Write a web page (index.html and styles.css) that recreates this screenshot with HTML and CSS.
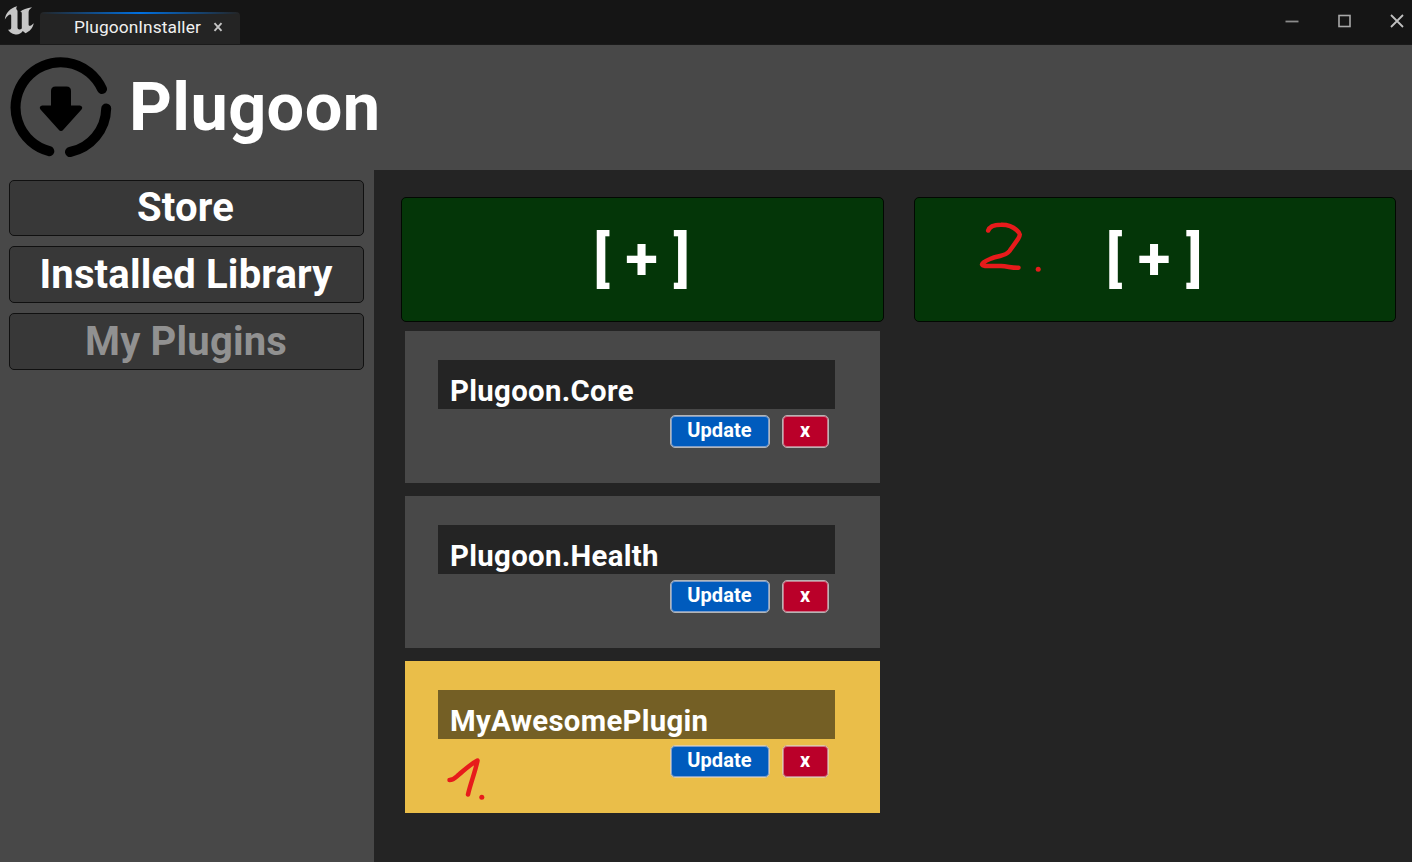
FILE: index.html
```
<!DOCTYPE html>
<html lang="en">
<head>
<meta charset="utf-8">
<title>PlugoonInstaller</title>
<link rel="stylesheet" href="styles.css">
</head>
<body>
<div class="window">
  <div class="titlebar">
    <svg class="engine-logo" width="40" height="44" viewBox="0 0 40 44"><path fill="#c6c6c6" d="M4.800 19.500C5.500 13 10 8 17.200 6.200C15.800 8 16 9 17.500 10.800V27.500C17.500 29.500 19.800 30.300 21.800 28.500V13.500C21.800 12 21 11.500 19.800 12C22.500 9.500 27 8 32 7.300C29.500 9.300 28.600 10.500 28.600 12.500V24.500C28.600 26.800 31 26 33.800 23.300C32.700 28.500 29.500 31.500 25.500 33.200L22.800 31C21 33.500 18.500 35 15.500 34.500C11.500 34 8.800 31.500 8 29.500C9.500 30.200 11.200 29.500 11.200 27.500V15.800C11.200 13.500 8.500 13.500 4.800 19.500Z"/></svg>
    <div class="tab">
      <span class="tab-title">PlugoonInstaller</span>
      <svg class="tab-close" width="10" height="10" viewBox="0 0 10 10"><path d="M1.500 1.200L8.500 8.800M8.500 1.200L1.500 8.800" stroke="#c4c4c4" stroke-width="1.900"/></svg>
    </div>
    <svg class="window-controls" width="132" height="44" viewBox="0 0 132 44" fill="none"><path d="M5.500 21.500H18.500" stroke="#8c8c8c" stroke-width="1.800"/><rect x="59" y="15.500" width="11" height="11" stroke="#a8a8a8" stroke-width="1.600"/><path d="M111 15L123 27M123 15L111 27" stroke="#c0c0c0" stroke-width="1.800"/></svg>
  </div>
  <header class="header">
    <svg class="logo" width="104" height="104" viewBox="0 0 104 104"><path d="M93 34A45.200 45.200 0 1 0 40.300 96.200M97.200 53.500A45.200 45.200 0 0 1 61 97" fill="none" stroke="#000" stroke-width="10" stroke-linecap="round"/><path d="M46.500 31.500H57.500Q62 31.500 62 36V50.500H71Q74.500 51.500 72.500 54.500L54.500 74.500Q52 77.500 49.500 74.500L31.500 54.500Q29.500 51.500 33 50.500H42V36Q42 31.500 46.500 31.500Z"/></svg>
    <h1 class="brand">Plugoon</h1>
  </header>
  <div class="body">
    <nav class="sidebar">
      <button class="nav-button nav-first">Store</button>
      <button class="nav-button">Installed Library</button>
      <button class="nav-button nav-disabled">My Plugins</button>
    </nav>
    <main class="content">
      <section class="column">
        <button class="add">[ + ]</button>
        <div class="cards">
          <article class="card">
            <div class="name">Plugoon.Core</div>
            <div class="actions"><button class="action update">Update</button><button class="action remove">x</button></div>
          </article>
          <article class="card">
            <div class="name">Plugoon.Health</div>
            <div class="actions"><button class="action update">Update</button><button class="action remove">x</button></div>
          </article>
          <article class="card card-own">
            <div class="name">MyAwesomePlugin</div>
            <div class="actions"><button class="action update">Update</button><button class="action remove">x</button></div>
            <svg class="mark mark-one" width="60" height="60" viewBox="0 0 60 60"><path d="M9.500 24C14 24 15 22 19 18.500C25 13.500 30 8.500 37.500 4.500C35.500 15 30 29 28 38.500"/><circle cx="41.800" cy="41.300" r="2.500"/></svg>
          </article>
        </div>
      </section>
      <section class="column">
        <button class="add">[ + ]</button>
        <svg class="mark mark-two" width="80" height="65" viewBox="0 0 80 65"><path d="M18.200 15.500C19.500 11.500 25 9.700 31 9.700C39 9.500 43 11.500 47 15.500C50.500 18.500 50.500 20 48 24C45 28.500 42 32.500 39.500 36C35 42 30 39.500 20 44C14 46.500 12 48.500 12 49.500C13 52 20 50.700 31 51C38 51.300 42 53 48.500 52.700"/><circle cx="68.200" cy="54.200" r="2.500"/></svg>
      </section>
    </main>
  </div>
</div>
</body>
</html>
```
FILE: styles.css
```
* { box-sizing: border-box; }
body { margin: 0; font-family: Roboto, "Liberation Sans", sans-serif; color: #fff; }
button { font: inherit; font-weight: 700; color: inherit; padding: 0; margin: 0; display: block; }
.window { width: 1412px; height: 862px; display: flex; flex-direction: column; background: #484848; overflow: hidden; }

.titlebar { height: 45px; flex: none; display: flex; background: #151515; border-bottom: 1px solid #1a1a1a; }
.engine-logo { flex: none; }
.tab { width: 200px; height: 32px; margin-top: 12px; padding-left: 34px; display: flex; align-items: flex-start; background: linear-gradient(90deg, #242424, #0070e0 50%, #242424) 0 0 / 100% 2px no-repeat #242424; border-radius: 4px 4px 0 0; }
.tab-title { font-size: 17.330px; line-height: 30px; letter-spacing: 0.080px; color: #f0f0f0; white-space: nowrap; }
.tab-close { margin: 10px 0 0 12px; flex: none; }
.window-controls { margin-left: auto; flex: none; }

.header { height: 125px; flex: none; display: flex; padding: 10px 0 0 9px; }
.logo { flex: none; }
.brand { margin: 0 0 0 16px; font-size: 66.670px; line-height: 104px; letter-spacing: 0.400px; font-weight: 700; }

.body { flex: 1; display: flex; min-height: 0; }
.sidebar { width: 374px; flex: none; padding: 10px 10px 0 9px; display: flex; flex-direction: column; gap: 10px; }
.nav-button { height: 57px; flex: none; padding-right: 1px; font-size: 40px; line-height: 55px; letter-spacing: 0.180px; background: #383838; border: 1px solid #101010; border-radius: 5px; }
.nav-first { height: 56px; line-height: 54px; padding-right: 2px; }
.nav-disabled { color: #919191; }

.content { flex: 1; display: flex; gap: 30px; padding: 27px 16px 0 27px; background: #242424; }
.column { flex: 1; position: relative; }
.add { width: 100%; height: 125px; padding: 0 1px 2px 0; font-size: 60px; line-height: 118px; letter-spacing: 0.300px; background: #043608; border: 1px solid #020802; border-radius: 5px; }
.cards { margin: 9px 4px 0; display: flex; flex-direction: column; gap: 13px; }
.card { position: relative; height: 152px; padding: 29px 45px 0 33px; background: #484848; }
.card-own { background: #eabe49; }
.name { height: 49px; padding: 11px 0 0 12px; font-size: 29.330px; line-height: 40px; letter-spacing: 0.330px; font-weight: 700; background: #242424; }
.card-own .name { letter-spacing: 0.290px; background: #745f25; }
.actions { display: flex; justify-content: flex-end; gap: 12px; padding: 6px 6px 0 0; }
.action { height: 33px; font-size: 20px; line-height: 28px; padding-bottom: 3px; border: 1px solid #b4b4b4; border-radius: 5px; }
.card-own .action { border-color: #e0cda0; }
.update { width: 100px; letter-spacing: 0.100px; background: #005bbd; box-shadow: inset 0 0 0 1px #7c9dcb; }
.remove { width: 47px; background: #ba0029; box-shadow: inset 0 0 0 1px #c97588; }

.mark { position: absolute; fill: none; stroke: #e71b1b; stroke-width: 4.500; stroke-linecap: round; stroke-linejoin: round; }
.mark circle { fill: #e71b1b; stroke: none; }
.mark-one { left: 35px; top: 95px; }
.mark-two { left: 56px; top: 18px; }
```
